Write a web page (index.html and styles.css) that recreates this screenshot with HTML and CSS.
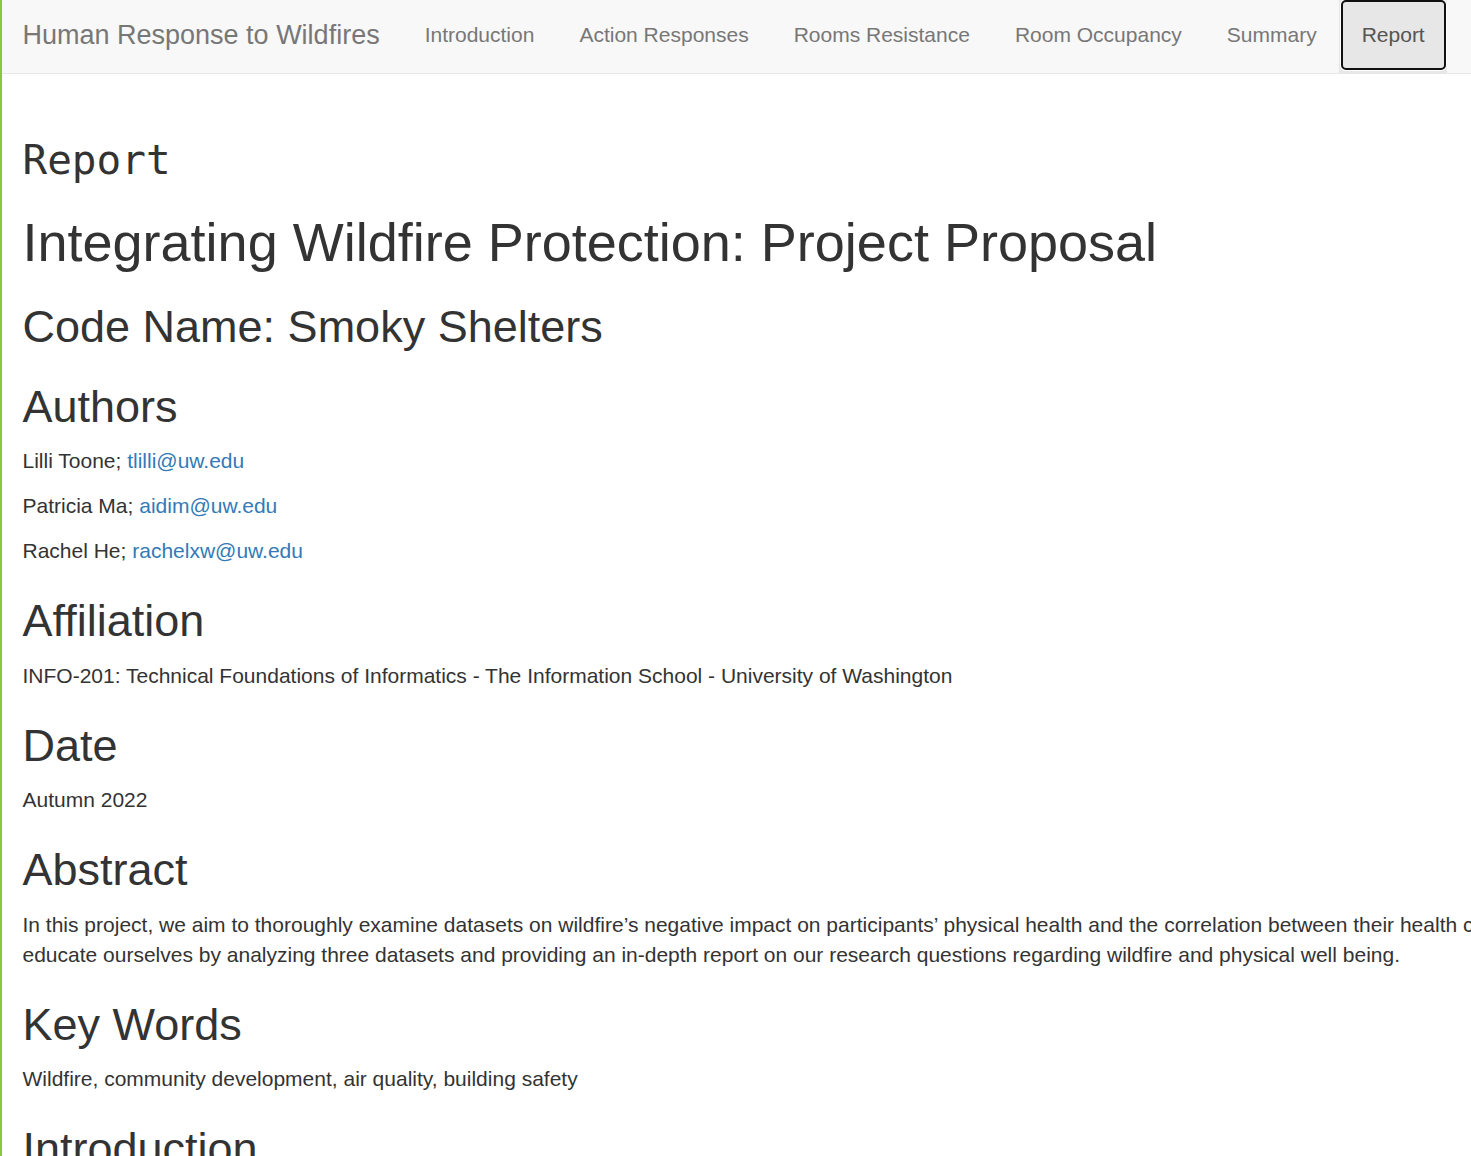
FILE: index.html
```html
<!DOCTYPE html>
<html lang="en">
<head>
<meta charset="utf-8">
<title>Human Response to Wildfires</title>
<link rel="stylesheet" href="styles.css">
</head>
<body>
<nav class="navbar">
  <span class="brand">Human Response to Wildfires</span>
  <ul class="nav">
    <li><a href="#">Introduction</a></li>
    <li><a href="#">Action Responses</a></li>
    <li><a href="#">Rooms Resistance</a></li>
    <li><a href="#">Room Occupancy</a></li>
    <li><a href="#">Summary</a></li>
    <li class="active"><a href="#">Report</a></li>
  </ul>
</nav>
<main class="content">
  <h1 class="page-title">Report</h1>
  <h1>Integrating Wildfire Protection: Project Proposal</h1>
  <h2>Code Name: Smoky Shelters</h2>
  <h2>Authors</h2>
  <p>Lilli Toone; <a href="#">tlilli@uw.edu</a></p>
  <p>Patricia Ma; <a href="#">aidim@uw.edu</a></p>
  <p>Rachel He; <a href="#">rachelxw@uw.edu</a></p>
  <h2>Affiliation</h2>
  <p>INFO-201: Technical Foundations of Informatics - The Information School - University of Washington</p>
  <h2>Date</h2>
  <p>Autumn 2022</p>
  <h2>Abstract</h2>
  <p class="abstract">In this project, we aim to thoroughly examine datasets on wildfire’s negative impact on participants’ physical health and the correlation between their health conditions and building safety. We hope to<br>educate ourselves by analyzing three datasets and providing an in-depth report on our research questions regarding wildfire and physical well being.</p>
  <h2>Key Words</h2>
  <p>Wildfire, community development, air quality, building safety</p>
  <h2>Introduction</h2>
</main>
</body>
</html>
```

FILE: styles.css
```css
html {
  scrollbar-width: none;
}

body {
  margin: 0;
  border-left: 2px solid #8cc63f;
  min-height: 100vh;
  overflow-x: hidden;
  background: #fff;
  color: #333;
  font-family: "Liberation Sans", Arial, sans-serif;
  font-size: 21px;
  line-height: 30px;
}

.navbar {
  display: flex;
  align-items: stretch;
  height: 73px;
  background: #f8f8f8;
  border-bottom: 1px solid #e7e7e7;
}

.brand {
  padding: 20px 22.5px 23px 20.5px;
  font-size: 27px;
  line-height: 30px;
  color: #777;
  white-space: nowrap;
}

.nav {
  display: flex;
  margin: 0;
  padding: 0;
  list-style: none;
}

.nav li {
  display: flex;
}

.nav a {
  position: relative;
  padding: 20px 22.5px 23px;
  font-size: 21px;
  line-height: 30px;
  color: #777;
  text-decoration: none;
  white-space: nowrap;
}

.nav .active a {
  background: #e7e7e7;
  color: #555;
}

.nav .active a::after {
  content: "";
  position: absolute;
  top: 0;
  right: 1px;
  bottom: 3px;
  left: 2px;
  border: 2px solid #101010;
  border-radius: 5px;
  box-shadow: 0 0 0 1px #fff;
}

.content {
  padding: 30px 22.5px 0 20.5px;
}

h1, h2 {
  font-weight: 400;
  line-height: 1.1;
  color: #333;
}

h1 {
  font-size: 54px;
  margin: 30px 0 15px;
}

.page-title {
  font-family: "DejaVu Sans Mono", "Liberation Mono", monospace;
  font-size: 41px;
  line-height: 44px;
  margin: 34px 0 31px;
}

h2 {
  font-size: 45px;
  margin: 30px 0 15px;
}

p {
  margin: 0 0 15px;
}

a {
  color: #337ab7;
  text-decoration: none;
}

.abstract {
  white-space: nowrap;
}
```
